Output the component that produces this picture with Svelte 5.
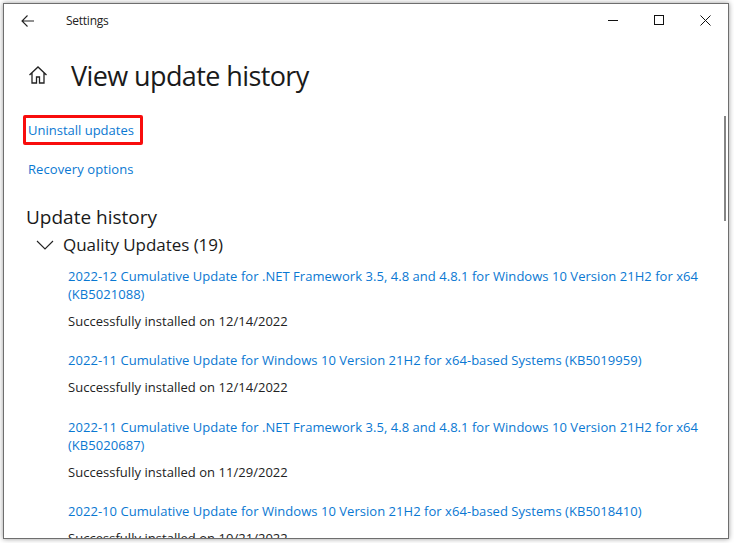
<script>
  const entries = [
    { title: ['2022-12 Cumulative Update for .NET Framework 3.5, 4.8 and 4.8.1 for Windows 10 Version 21H2 for x64', '(KB5021088)'], date: '12/14/2022' },
    { title: ['2022-11 Cumulative Update for Windows 10 Version 21H2 for x64-based Systems (KB5019959)'], date: '12/14/2022' },
    { title: ['2022-11 Cumulative Update for .NET Framework 3.5, 4.8 and 4.8.1 for Windows 10 Version 21H2 for x64', '(KB5020687)'], date: '11/29/2022' },
    { title: ['2022-10 Cumulative Update for Windows 10 Version 21H2 for x64-based Systems (KB5018410)'], date: '10/21/2022' }
  ];
</script>

<div class="stage">
  <div class="window">
    <header class="titlebar">
      <div class="title-left">
        <svg class="back" width="16" height="14" viewBox="0 0 16 14"><path d="M14 7H2M7.500 1.500 2 7l5.500 5.500" fill="none" stroke="#222" stroke-width="1.100"/></svg>
        <span class="app-name">Settings</span>
      </div>
      <div class="controls">
        <svg width="11" height="11" viewBox="0 0 11 11"><path d="M0 5.500h10" stroke="#111" stroke-width="1"/></svg>
        <svg width="11" height="11" viewBox="0 0 11 11"><rect x=".5" y=".5" width="9" height="9" fill="none" stroke="#111"/></svg>
        <svg width="11" height="11" viewBox="0 0 11 11"><path d="M.5.5l10 10M10.500.5l-10 10" stroke="#111" stroke-width="1"/></svg>
      </div>
    </header>
    <main class="content">
      <div class="page-head">
        <svg class="home" width="20" height="20" viewBox="0 0 20 20"><path d="M1.500 10 10 2l8.500 8M4 7.700V18h4.500v-6h3v6H16V7.700" fill="none" stroke="#222" stroke-width="1.300"/></svg>
        <h1>View update history</h1>
      </div>
      <div class="links">
        <a class="link marked">Uninstall updates</a>
        <a class="link recovery">Recovery options</a>
      </div>
      <h2>Update history</h2>
      <div class="group">
        <svg width="18" height="10" viewBox="0 0 18 10"><path d="M1 1l8 8 8-8" fill="none" stroke="#222" stroke-width="1.100"/></svg>
        <span>Quality Updates (19)</span>
      </div>
      <ul>
        {#each entries as e}
          <li>
            <a class="link update">{#each e.title as line}<span>{line}</span>{/each}</a>
            <p>Successfully installed on {e.date}</p>
          </li>
        {/each}
      </ul>
    </main>
    <div class="scrollbar"></div>
  </div>
</div>

<style>
  :global(body) { margin: 0; background: #fff; }
  .stage { width: 734px; height: 543px; box-sizing: border-box; padding: 3px 5px 4px 3px; background: #fff; overflow: hidden; font-family: "Open Sans", "Noto Sans", sans-serif; }
  .window { position: relative; height: 100%; box-sizing: border-box; background: #fff; border: 1px solid #6e6e6e; box-shadow: 0 0 5px rgba(0,0,0,.4); overflow: hidden; color: #1a1a1a; }
  .titlebar { display: flex; justify-content: space-between; align-items: center; height: 33px; }
  .title-left { display: flex; align-items: center; gap: 30px; padding-left: 16px; }
  .app-name { font-size: 12px; letter-spacing: -.25px; color: #222; }
  .controls { display: flex; gap: 35px; padding-right: 17px; }
  .content { padding-left: 23px; }
  .page-head { display: flex; align-items: center; gap: 23px; margin-left: 1px; margin-top: 14px; height: 48px; }
  h1 { margin: 0; font-size: 27px; font-weight: 400; letter-spacing: -.6px; }
  .links { display: flex; flex-direction: column; align-items: flex-start; margin-top: 16px; }
  .link { color: #0a78d2; font-size: 13px; line-height: 18px; }
  .marked { padding: 3px 6px 3px 2px; border: 3px solid #f80d0d; border-radius: 2px; margin-left: -4px; }
  .recovery { margin: 15px 0 0 1px; letter-spacing: .1px; }
  h2 { margin: 27px 0 0 -1px; font-size: 19px; font-weight: 400; letter-spacing: 0; line-height: 24px; }
  .group { display: flex; align-items: center; gap: 9px; margin-left: 9px; margin-top: 4px; font-size: 17px; letter-spacing: -.05px; line-height: 24px; }
  ul { list-style: none; margin: 10px 0 0 41px; padding: 0; }
  li { margin-bottom: 21px; }
  li:nth-child(2) { margin-bottom: 22px; }
  .update { display: flex; flex-direction: column; white-space: nowrap; letter-spacing: .04px; }
  p { margin: 9px 0 0; font-size: 13px; letter-spacing: .03px; line-height: 18px; color: #222; }
  .scrollbar { position: absolute; right: 2px; top: 112px; width: 2px; height: 105px; background: #858585; }
</style>
